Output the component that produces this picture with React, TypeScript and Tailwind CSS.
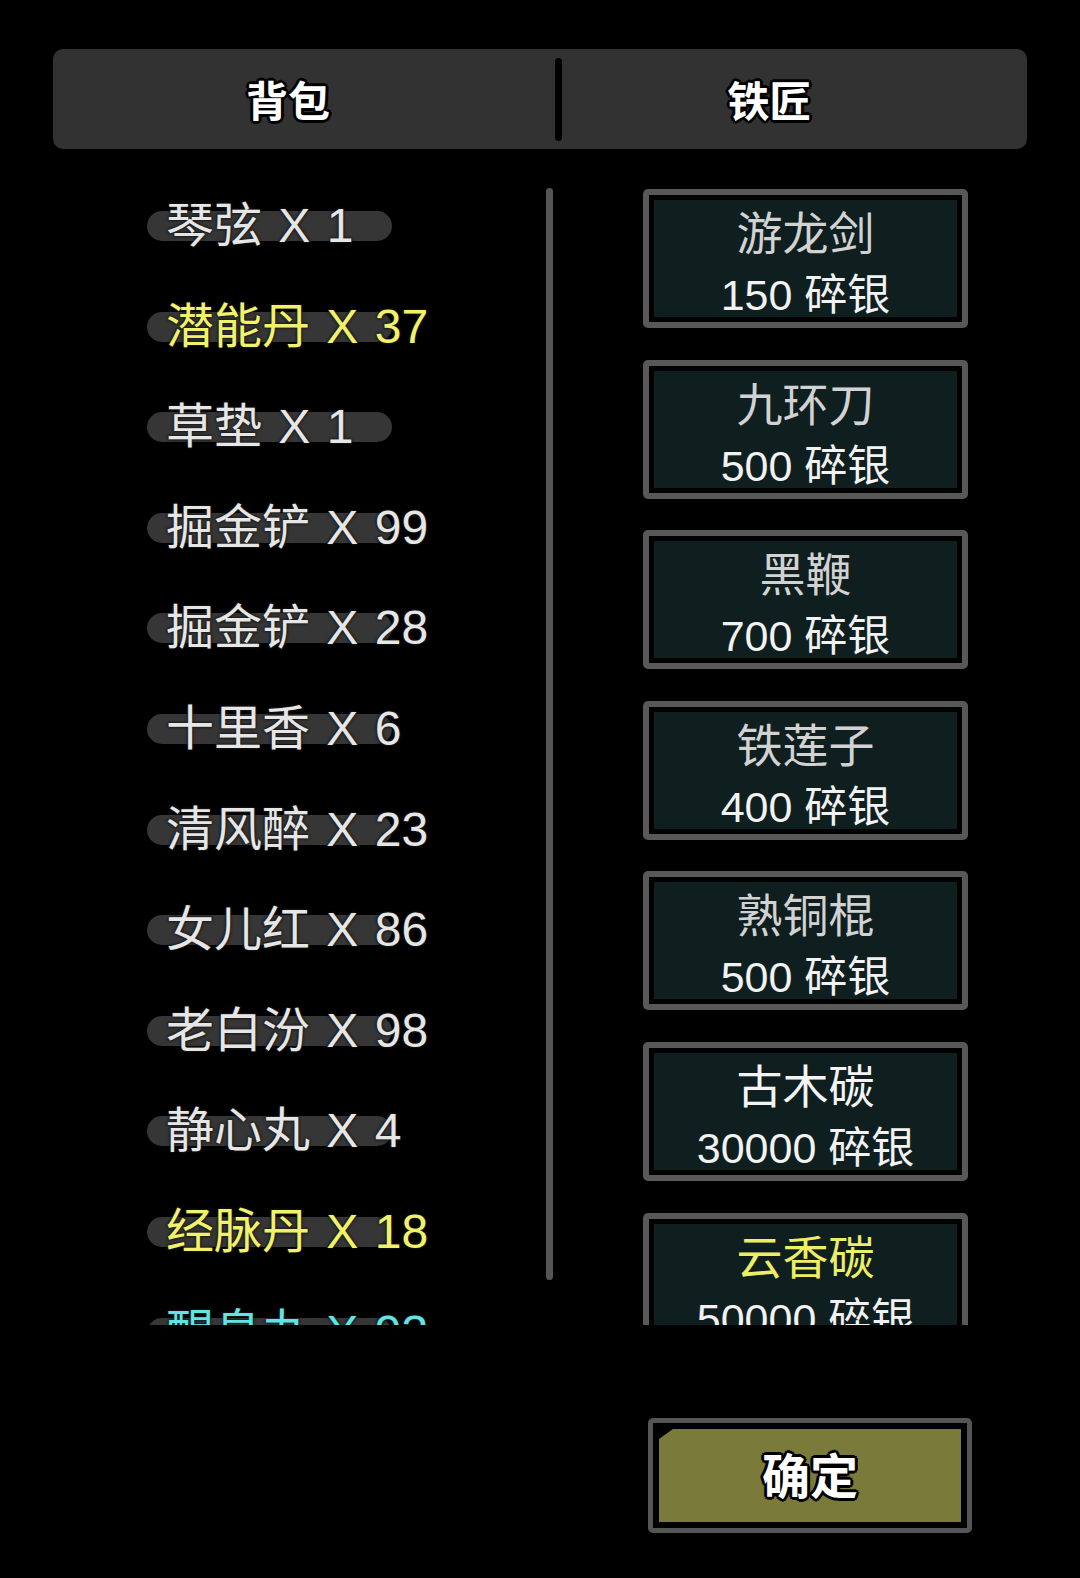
import React from "react";

type Tone = "white" | "yellow" | "cyan";

interface BagItem {
  name: string;
  count: number;
  tone: Tone;
}

interface ShopItem {
  name: string;
  price: number;
  tone: "gray" | "white" | "yellow";
}

const bagItems: BagItem[] = [
  { name: "琴弦", count: 1, tone: "white" },
  { name: "潜能丹", count: 37, tone: "yellow" },
  { name: "草垫", count: 1, tone: "white" },
  { name: "掘金铲", count: 99, tone: "white" },
  { name: "掘金铲", count: 28, tone: "white" },
  { name: "十里香", count: 6, tone: "white" },
  { name: "清风醉", count: 23, tone: "white" },
  { name: "女儿红", count: 86, tone: "white" },
  { name: "老白汾", count: 98, tone: "white" },
  { name: "静心丸", count: 4, tone: "white" },
  { name: "经脉丹", count: 18, tone: "yellow" },
  { name: "醒息丸", count: 93, tone: "cyan" },
];

const shopItems: ShopItem[] = [
  { name: "游龙剑", price: 150, tone: "gray" },
  { name: "九环刀", price: 500, tone: "gray" },
  { name: "黑鞭", price: 700, tone: "gray" },
  { name: "铁莲子", price: 400, tone: "gray" },
  { name: "熟铜棍", price: 500, tone: "gray" },
  { name: "古木碳", price: 30000, tone: "white" },
  { name: "云香碳", price: 50000, tone: "yellow" },
];

const bagTone: Record<Tone, string> = {
  white: "text-[#e6e6e6]",
  yellow: "text-[#f2f26a]",
  cyan: "text-[#62e4e4]",
};

const shopTone: Record<ShopItem["tone"], string> = {
  gray: "text-[#d2d2d2]",
  white: "text-[#f4f4f4]",
  yellow: "text-[#eeee66]",
};

const outline =
  "[text-shadow:2px_2px_0_#000,-2px_2px_0_#000,2px_-2px_0_#000,-2px_-2px_0_#000,0_3px_0_#000,0_-3px_0_#000,3px_0_0_#000,-3px_0_0_#000]";

export default function App() {
  return (
    <div className="w-[1080px] h-[1578px] bg-black font-['Liberation_Sans','Noto_Sans_CJK_SC',sans-serif] pt-[49px] px-[53px]">
      {/* tabs */}
      <div className="flex h-[100px] items-center rounded-[10px] bg-[#323232]">
        <div className="flex w-[502px] justify-center pr-[32px] pt-[8px]">
          <span className={`text-[42px] font-bold leading-none text-white ${outline}`}>背包</span>
        </div>
        <div className="h-[83px] w-[7px] rounded-full bg-black" />
        <div className="flex flex-1 justify-center pr-[50px] pt-[8px]">
          <span className={`text-[42px] font-bold leading-none text-white ${outline}`}>铁匠</span>
        </div>
      </div>

      <div className="mt-[40px] flex h-[1136px]">
        {/* bag list */}
        <div className="h-full w-[493px] overflow-hidden">
          {bagItems.map((it, i) => (
            <div key={i} className="h-[100.6px]">
              <div className="relative ml-[94px] flex h-[74px] items-center">
                <div className="absolute left-0 top-[22px] h-[30px] w-[245px] rounded-full bg-[#363636]" />
                <span
                  className={`relative ml-[19px] whitespace-pre text-[48px] leading-none [word-spacing:3px] ${bagTone[it.tone]} [text-shadow:0_0_3px_#1a1a1a,0_0_3px_#1a1a1a,0_0_2px_#1a1a1a]`}
                >
                  {`${it.name} X ${it.count}`}
                </span>
              </div>
            </div>
          ))}
        </div>

        <div className="-mt-[1px] h-[1092px] w-[7px] rounded-full bg-[#555555]" />

        {/* smith list */}
        <div className="ml-[90px] flex h-full w-[325px] flex-col gap-[31.6px] overflow-hidden">
          {shopItems.map((it, i) => (
            <div
              key={i}
              className="h-[139px] shrink-0 rounded-[5px] border-[6px] border-[#585858] bg-black p-[5px]"
            >
              <div className="flex h-full flex-col items-center bg-[#0f1f1f] pt-[8px]">
                <div className={`h-[52px] text-[46px] leading-[52px] ${shopTone[it.tone]}`}>{it.name}</div>
                <div className="mt-[13px] whitespace-pre text-[43px] leading-[44px] text-[#f2f2f2]">
                  {`${it.price} 碎银`}
                </div>
              </div>
            </div>
          ))}
        </div>
      </div>

      {/* confirm */}
      <div className="ml-[595px] mt-[93px] h-[115px] w-[324px] rounded-[5px] border-[5px] border-[#555555] bg-black p-[6px]">
        <div className="flex h-full items-center justify-center bg-[#7a7a3a] pt-[4px] [clip-path:polygon(14px_0,100%_0,100%_100%,0_100%,0_10px)]">
          <span className={`text-[48px] font-bold leading-none text-white ${outline}`}>确定</span>
        </div>
      </div>
    </div>
  );
}
